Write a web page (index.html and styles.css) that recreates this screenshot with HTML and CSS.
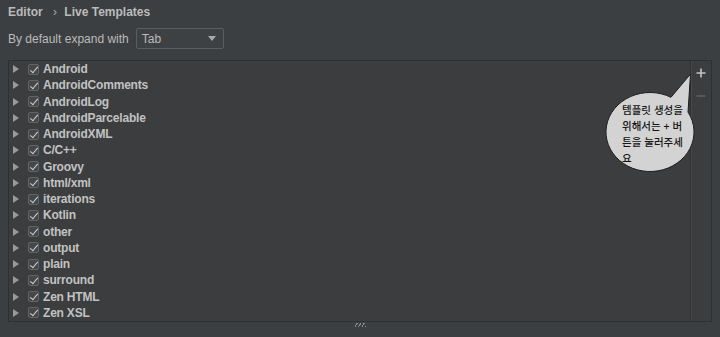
FILE: index.html
```html
<!DOCTYPE html>
<html lang="ko">
  <head>
    <meta charset="UTF-8" />
    <meta name="viewport" content="width=device-width, initial-scale=1.0" />
    <link rel="stylesheet" href="styles.css">
    <title>Live Templates</title>
  </head>
  <body>
    <div class="crumbs">
      <span>Editor</span>
      <span class="sep">›</span>
      <span>Live Templates</span>
    </div>

    <div class="expand">
      <label for="expand-key">By default expand with</label>
      <div class="combo" id="expand-key">
        <span>Tab</span>
        <span class="arrow"></span>
      </div>
    </div>

    <div class="panel">
      <ul class="groups">
        <li><i class="tri"></i><i class="check"></i>Android</li>
        <li><i class="tri"></i><i class="check"></i>AndroidComments</li>
        <li><i class="tri"></i><i class="check"></i>AndroidLog</li>
        <li><i class="tri"></i><i class="check"></i>AndroidParcelable</li>
        <li><i class="tri"></i><i class="check"></i>AndroidXML</li>
        <li><i class="tri"></i><i class="check"></i>C/C++</li>
        <li><i class="tri"></i><i class="check"></i>Groovy</li>
        <li><i class="tri"></i><i class="check"></i>html/xml</li>
        <li><i class="tri"></i><i class="check"></i>iterations</li>
        <li><i class="tri"></i><i class="check"></i>Kotlin</li>
        <li><i class="tri"></i><i class="check"></i>other</li>
        <li><i class="tri"></i><i class="check"></i>output</li>
        <li><i class="tri"></i><i class="check"></i>plain</li>
        <li><i class="tri"></i><i class="check"></i>surround</li>
        <li><i class="tri"></i><i class="check"></i>Zen HTML</li>
        <li><i class="tri"></i><i class="check"></i>Zen XSL</li>
      </ul>
      <div class="toolbar">
        <svg class="tool" width="10" height="10" viewBox="0 0 10 10">
          <path d="M5 0.5v9M0.5 5h9" stroke="#c4c4c4" stroke-width="1.6" />
        </svg>
        <svg class="tool dim" width="10" height="10" viewBox="0 0 10 10">
          <path d="M0.5 5h9" stroke="#8a8a8a" stroke-width="1.4" />
        </svg>
      </div>

      <!-- 말풍선 안내 -->
      <div class="bubble">
        <svg width="100" height="104" viewBox="0 0 100 104">
          <path d="M66 27.3 L85.5 4 L83 42.1 A44 39.5 0 1 1 66 27.3 Z"
                fill="#d3d3d3" stroke="#1e1e1e" stroke-width="1" />
        </svg>
        <p>템플릿 생성을 위해서는 + 버튼을 눌러주세요</p>
      </div>
    </div>

    <div class="grip"></div>
  </body>
</html>
```

FILE: styles.css
```css
html,
body {
  margin: 0;
  background: #3c3f41;
}

body {
  color: #bbbbbb;
  font-family: "Liberation Sans", Arial, sans-serif;
  font-size: 12px;
  height: 337px;
  overflow: hidden;
}

.crumbs {
  padding: 5px 8px 0;
  height: 15px;
  line-height: 15px;
  font-weight: bold;
}

.crumbs .sep {
  font-weight: normal;
  margin: 0 4px 0 7px;
  color: #aaa;
}

.expand {
  display: flex;
  align-items: center;
  gap: 7px;
  padding: 8px 8px 0;
  height: 21px;
}

.combo {
  display: flex;
  align-items: center;
  justify-content: space-between;
  box-sizing: border-box;
  width: 88px;
  height: 21px;
  padding: 0 7px 0 5px;
  border: 1px solid #5b5d5f;
  border-radius: 2px;
  background: #3e4143;
}

.combo .arrow {
  width: 0;
  height: 0;
  border-left: 4px solid transparent;
  border-right: 4px solid transparent;
  border-top: 5px solid #a9a9a9;
}

.panel {
  position: relative;
  display: flex;
  margin: 11px 8px 0;
  height: 260px;
  border: 1px solid #2e3032;
  background: #3b3d3f;
}

.groups {
  flex: 1;
  margin: 0;
  padding: 0;
  list-style: none;
}

.groups li {
  display: flex;
  align-items: center;
  height: 16.25px;
  font-weight: bold;
  letter-spacing: -0.2px;
  color: #c2c2c2;
}

.tri {
  width: 0;
  height: 0;
  margin: 0 9px 0 4px;
  border-top: 4px solid transparent;
  border-bottom: 4px solid transparent;
  border-left: 6px solid #9a9a9a;
}

.check {
  position: relative;
  box-sizing: border-box;
  width: 11px;
  height: 11px;
  margin-right: 4px;
  border: 1px solid #626466;
  border-radius: 2px;
  background: #45484a;
}

.check::after {
  content: "";
  position: absolute;
  left: 3px;
  top: 0;
  width: 3px;
  height: 7px;
  border-right: 1.3px solid #d0d0d0;
  border-bottom: 1.3px solid #d0d0d0;
  transform: rotate(40deg);
}

.toolbar {
  display: flex;
  flex-direction: column;
  align-items: center;
  gap: 13px;
  width: 20px;
  padding-top: 7px;
  border-left: 1px solid #2e3032;
  box-shadow: inset 1px 0 0 #46494b;
}

.tool.dim {
  opacity: 0.5;
}

.bubble {
  position: absolute;
  left: 596px;
  top: 9px;
  width: 100px;
  height: 104px;
}

.bubble svg {
  position: absolute;
  left: 0;
  top: 0;
}

.bubble p {
  position: relative;
  margin: 0;
  padding: 32px 0 0 17px;
  width: 64px;
  font-family: "Noto Sans CJK KR", sans-serif;
  font-size: 10.5px;
  font-weight: 500;
  line-height: 16px;
  color: #161616;
  word-break: break-all;
}

.grip {
  width: 12px;
  height: 4px;
  margin: 1px auto 0;
  background: repeating-linear-gradient(
    -60deg,
    #8c8c8c 0 1px,
    transparent 1px 3px
  );
}
```
